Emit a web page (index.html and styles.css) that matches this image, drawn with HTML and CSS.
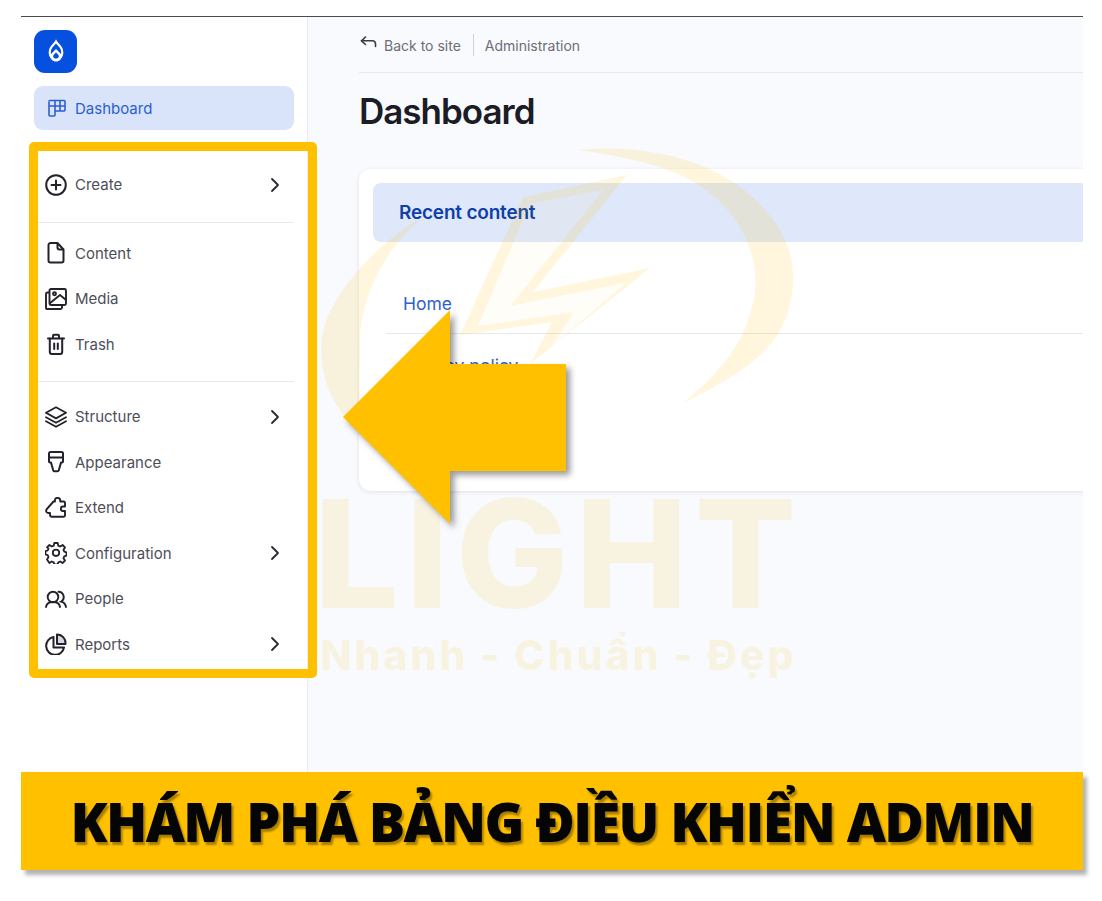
FILE: index.html
```html
<!DOCTYPE html>
<html lang="vi">
<head>
    <meta charset="UTF-8">
    <meta name="viewport" content="width=device-width, initial-scale=1.0">
    <title>Dashboard</title>
    <link rel="stylesheet" href="styles.css">
</head>
<body>
    <div class="frame">
        <aside class="sidebar">
            <div class="logo">
                <svg width="26" height="26" viewBox="0 0 26 26" fill="none">
                    <path d="M13 2.500c1.300 2.300 3 3.500 4.300 5.100 1.300 1.600 2 3.700 2 6.100a6.300 6.300 0 0 1-12.600 0c0-2.400.7-4.500 2-6.100C10 6 11.700 4.800 13 2.500z" stroke="#fff" stroke-width="2.200"/>
                    <path d="M7 16l6-6 6 6c0 4-2.500 6.500-6 6.500S7 20 7 16z" fill="#fff"/>
                    <path d="M13 13.200c1 1.300 2 2.100 2.600 3 .9 1.800-.6 3.400-2.600 3.400s-3.500-1.600-2.600-3.400c.6-.9 1.600-1.700 2.600-3z" fill="#0650e0"/>
                </svg>
            </div>
            <a class="nav-item active">
                <svg class="icon" viewBox="0 0 20 20" fill="none" stroke="currentColor" stroke-width="1.600" stroke-linejoin="round">
                    <path d="M2 3.500a1 1 0 0 1 1-1h14a1 1 0 0 1 1 1V12a1 1 0 0 1-1 1H8"/>
                    <path d="M2 3.500V17a1 1 0 0 0 1 1h4a1 1 0 0 0 1-1V2.500M2 8h6M13 2.500V13M8 8h10"/>
                </svg>
                <span>Dashboard</span>
            </a>
            <nav class="menu">
                <div class="menu-group first">
                    <a class="nav-item">
                        <svg class="icon" viewBox="0 0 22 22" fill="none" stroke="currentColor" stroke-width="2" stroke-linecap="round">
                            <circle cx="11" cy="11" r="9.800"/>
                            <path d="M11 6.500v9M6.500 11h9"/>
                        </svg>
                        <span>Create</span>
                        <svg class="chevron" viewBox="0 0 10 16"><path d="M2 2l6 6-6 6"/></svg>
                    </a>
                </div>
                <div class="menu-group">
                    <a class="nav-item">
                        <svg class="icon" viewBox="0 0 22 22" fill="none" stroke="currentColor" stroke-width="2" stroke-linejoin="round">
                            <path d="M3.500 3a2 2 0 0 1 2-2h7l6 6.500V18.500a2 2 0 0 1-2 2h-11a2 2 0 0 1-2-2z"/>
                            <path d="M12.500 1v4.500a2 2 0 0 0 2 2h4"/>
                        </svg>
                        <span>Content</span>
                    </a>
                    <a class="nav-item">
                        <svg class="icon" viewBox="0 0 22 22" fill="none" stroke="currentColor" stroke-width="1.900" stroke-linejoin="round">
                            <rect x="4.500" y="1" width="16.500" height="16" rx="1.500"/>
                            <path d="M4.500 4.500H2.500a1.500 1.500 0 0 0-1.500 1.500v14a1 1 0 0 0 1 1h13.500a1.500 1.500 0 0 0 1.500-1.500v-3"/>
                            <path d="M4.500 15.500l10.500-8.500 6 5"/>
                            <circle cx="9.500" cy="5.800" r="1.500"/>
                        </svg>
                        <span>Media</span>
                    </a>
                    <a class="nav-item">
                        <svg class="icon" viewBox="0 0 22 22" fill="none" stroke="currentColor" stroke-width="2" stroke-linecap="round" stroke-linejoin="round">
                            <path d="M3 5.500h16M8 5.500V2.800a1 1 0 0 1 1-1h4a1 1 0 0 1 1 1v2.700"/>
                            <path d="M4.800 5.500V19a2 2 0 0 0 2 2h8.400a2 2 0 0 0 2-2V5.500"/>
                            <path d="M9.200 10.500v5.500M12.800 10.500v5.500"/>
                        </svg>
                        <span>Trash</span>
                    </a>
                </div>
                <div class="menu-group last">
                    <a class="nav-item">
                        <svg class="icon" viewBox="0 0 22 22" fill="none" stroke="currentColor" stroke-width="1.800" stroke-linecap="round" stroke-linejoin="round">
                            <path d="M11 1.200l10 5.600-10 5.600L1 6.800z"/>
                            <path d="M1 11.200l10 5.600 10-5.600"/>
                            <path d="M1 15.200l10 5.600 10-5.600"/>
                        </svg>
                        <span>Structure</span>
                        <svg class="chevron" viewBox="0 0 10 16"><path d="M2 2l6 6-6 6"/></svg>
                    </a>
                    <a class="nav-item">
                        <svg class="icon" viewBox="0 0 22 22" fill="none" stroke="currentColor" stroke-width="2" stroke-linejoin="round">
                            <path d="M4 2.500A1.500 1.500 0 0 1 5.500 1h11A1.500 1.500 0 0 1 18 2.500v8a1 1 0 0 1-1 1h-1l-2.200 7.700a1.500 1.500 0 0 1-1.500 1.100H9.700a1.500 1.500 0 0 1-1.500-1.100L6 11.500H5a1 1 0 0 1-1-1z"/>
                            <path d="M4 6.500h14"/>
                        </svg>
                        <span>Appearance</span>
                    </a>
                    <a class="nav-item">
                        <svg class="icon" viewBox="0 0 22 22" fill="none" stroke="currentColor" stroke-width="1.900" stroke-linejoin="round">
                            <path d="M8.500 4.500h1.500C9.500 1.800 11 .9 12.500.9s3.300 1 2.700 3.600h3.300A1.500 1.500 0 0 1 20 6v3.500h-2c-2.800 0-2.800 4.500 0 4.500h2v4a1.800 1.800 0 0 1-1.800 1.800H7a2 2 0 0 1-2-2V16H3.500C1.500 16 .5 14.200 1.500 12.500z"/>
                        </svg>
                        <span>Extend</span>
                    </a>
                    <a class="nav-item">
                        <svg class="icon" viewBox="0 0 22 22" fill="none" stroke="currentColor" stroke-width="1.800" stroke-linejoin="round">
                            <path d="M9.300 1h3.400l.6 2.700 1.900.8 2.400-1.500 2.400 2.400-1.500 2.400.8 1.900 2.200.6v3.400l-2.200.6-.8 1.900 1.500 2.400-2.400 2.400-2.400-1.500-1.900.8-.6 2.200H9.300l-.6-2.200-1.900-.8-2.400 1.500L2 17.400 3.500 15l-.8-1.900-2.200-.6V9.100l2.200-.6.800-1.900L2 5.400 4.400 3l2.400 1.500 1.900-.8z"/>
                            <circle cx="11" cy="10.800" r="3.200"/>
                        </svg>
                        <span>Configuration</span>
                        <svg class="chevron" viewBox="0 0 10 16"><path d="M2 2l6 6-6 6"/></svg>
                    </a>
                    <a class="nav-item">
                        <svg class="icon" viewBox="0 0 22 22" fill="none" stroke="currentColor" stroke-width="1.900" stroke-linecap="round">
                            <circle cx="8" cy="9" r="5.300"/>
                            <path d="M1 19c.5-3.400 3-5 7-5s6.500 1.600 7 5"/>
                            <path d="M13.500 3.800a5.300 5.300 0 0 1 2.500 9.900c2.900.7 4.500 2.400 5 5.300"/>
                        </svg>
                        <span>People</span>
                    </a>
                    <a class="nav-item">
                        <svg class="icon" viewBox="0 0 22 22" fill="none" stroke="currentColor" stroke-width="2" stroke-linejoin="round">
                            <path d="M12 1.500h.5a8.500 8.500 0 0 1 8 8.500v1H12z" fill="#d5d8e0"/>
                            <path d="M8.500 4a9 9 0 1 0 10.500 10.500H8.500z" stroke-linecap="round"/>
                        </svg>
                        <span>Reports</span>
                        <svg class="chevron" viewBox="0 0 10 16"><path d="M2 2l6 6-6 6"/></svg>
                    </a>
                </div>
            </nav>
        </aside>

        <main class="main">
            <div class="topbar">
                <svg class="back-icon" viewBox="0 0 18 14" fill="none" stroke="currentColor" stroke-width="1.600" stroke-linecap="round" stroke-linejoin="round">
                    <path d="M5.500 1L1.500 4.800l4 3.700"/>
                    <path d="M1.500 4.800h11a3 3 0 0 1 3 3v2.700"/>
                </svg>
                <span>Back to site</span>
                <span class="sep"></span>
                <span>Administration</span>
            </div>
            <h1>Dashboard</h1>
            <section class="card">
                <h2>Recent content</h2>
                <ul class="recent">
                    <li><a>Home</a></li>
                    <li><a>Privacy policy</a></li>
                </ul>
            </section>

            <!-- watermark sits over the page -->
            <div class="watermark">
                <svg class="wm-logo" viewBox="310 140 500 280" fill="#ffc000">
                    <path d="M577 150c40-4 80 0 115 12 40 14 70 38 88 68 14 24 16 48 10 74-8 36-30 62-107 99 40-32 60-62 68-92 6-22 6-40 0-58-10-36-40-66-76-80-30-12-60-18-98-23z"/>
                    <path d="M423 217c-40 22-74 58-94 96-10 22-10 48-2 72 6 18 18 36 38 52-6-20-6-50-5-80 0-20 0-34 5-50 8-32 26-62 58-90z"/>
                    <path fill-rule="evenodd" d="M627 175L523 197 460 335 552 322 530 364 650 268 533 292zM603 190L530 204 478 326 574 312 552 346 626 283 510 306z"/>
                    <path d="M603 190L530 204 478 326 574 312 552 346 626 283 510 306z" opacity=".25"/>
                </svg>
                <div class="wm-name">LIGHT</div>
                <div class="wm-tag">Nhanh - Chuẩn - Đẹp</div>
            </div>
        </main>
    </div>

    <svg class="arrow" width="240" height="230" viewBox="0 0 240 230">
        <polygon points="0,107 107,0 107,54 223,54 223,161 107,161 107,214"/>
    </svg>

    <div class="banner">KHÁM PHÁ BẢNG ĐIỀU KHIỂN ADMIN</div>
</body>
</html>
```

FILE: styles.css
```css
html, body { margin: 0; padding: 0; background: #fff; }
body { font-family: Inter, "Liberation Sans", sans-serif; position: relative; height: 901px; overflow: hidden; padding-top: 16px; box-sizing: border-box; }
a { text-decoration: none; color: inherit; }

.frame { display: flex; width: 1062px; height: 755px; margin-left: 21px; border-top: 1px solid #4a4a4f; overflow: hidden; }

.sidebar { flex: none; width: 260px; background: #fff; border-right: 1px solid #e9ebf1; padding: 13px 13px 0 13px; position: relative; z-index: 2; }
.logo { width: 43px; height: 43px; background: #0650e0; border-radius: 11px; display: flex; align-items: center; justify-content: center; }

.nav-item { display: flex; align-items: center; height: 45.5px; font-size: 15px; color: #4e4e58; }
.nav-item .icon { width: 22px; height: 22px; flex: none; margin-right: 8px; color: #22222b; }
.nav-item .chevron { width: 10px; height: 16px; margin-left: auto; margin-right: 14px; fill: none; stroke: #2a2a33; stroke-width: 1.800; stroke-linecap: round; stroke-linejoin: round; }

.active { margin-top: 13px; height: 44px; background: #d9e3fa; border-radius: 9px; color: #2b5fd0; padding-left: 13px; }
.active .icon { color: #2b5fd0; width: 20px; height: 20px; margin-right: 8px; }

.menu { margin: 12px -23px 0 -5px; border: 9px solid #ffc000; border-radius: 5px; height: 518px; }
.menu .nav-item { padding-left: 7px; }
.menu-group { margin-right: 14px; padding: 8px 0 14px; border-bottom: 1px solid #e8e9ee; }
.menu-group.first { padding-top: 11px; }
.menu-group.last { padding: 12px 0 0; border-bottom: 0; }

.main { flex: 1; min-width: 0; background: #f8fafe; padding-left: 51px; position: relative; }
.topbar { display: flex; align-items: center; height: 54px; padding-top: 1px; border-bottom: 1px solid #e8e9ee; font-size: 14px; color: #6d6d76; }
.back-icon { width: 18px; height: 14px; margin: 0 6px 4px 1px; color: #3b3b44; }
.sep { width: 1px; height: 22px; background: #cfd1d8; margin: 0 11px 0 12px; }

h1 { margin: 0; font-size: 35px; font-weight: 600; letter-spacing: -1px; color: #1c1c26; line-height: 40px; padding-top: 18px; }

.card { width: 900px; height: 322px; margin-top: 38px; background: #fff; border-radius: 12px; box-shadow: 0 1px 4px rgba(40, 50, 90, .12); padding: 14px; box-sizing: border-box; }
.card h2 { margin: 0; height: 59px; line-height: 60px; padding-left: 26px; background: #dfe8fa; border-radius: 8px; font-size: 19px; font-weight: 600; letter-spacing: -.2px; color: #0f3fa8; }
.recent { list-style: none; margin: 40px 0 0 13px; padding: 0; font-size: 17.500px; color: #2f5fd0; }
.recent li { padding: 20px 0 0 17px; height: 61px; line-height: 23px; box-sizing: border-box; border-bottom: 1px solid #e6e7eb; }
.recent li:first-child { height: 52px; padding-top: 10px; }
.recent li:last-child { border-bottom: 0; }

.watermark { position: absolute; left: 2px; top: 123px; width: 500px; pointer-events: none; }
.wm-logo { display: block; width: 500px; height: 280px; opacity: .13; }
.wm-name { position: absolute; top: 359px; left: 4px; font-size: 150px; font-weight: 800; line-height: 110px; letter-spacing: 7px; color: #ffc000; opacity: .11; }
.wm-tag { position: absolute; top: 492px; left: 10px; font-size: 41px; font-weight: 800; line-height: 46px; letter-spacing: 2.900px; white-space: nowrap; color: #ffc000; opacity: .11; }

.arrow { position: absolute; left: 343px; top: 310px; z-index: 3; fill: #ffc000; filter: drop-shadow(4px 4px 3px rgba(0, 0, 0, .4)); }

.banner { margin: 0 0 0 21px; width: 1062px; height: 98px; background: #ffc000; box-shadow: 4px 5px 4px rgba(0, 0, 0, .3); display: flex; align-items: center; justify-content: center; font-family: "Open Sans", sans-serif; font-size: 54px; letter-spacing: -1.600px; font-weight: 800; color: #050505; text-shadow: 2px 3px 2px rgba(0, 0, 0, .35); white-space: nowrap; position: relative; z-index: 4; }
```
